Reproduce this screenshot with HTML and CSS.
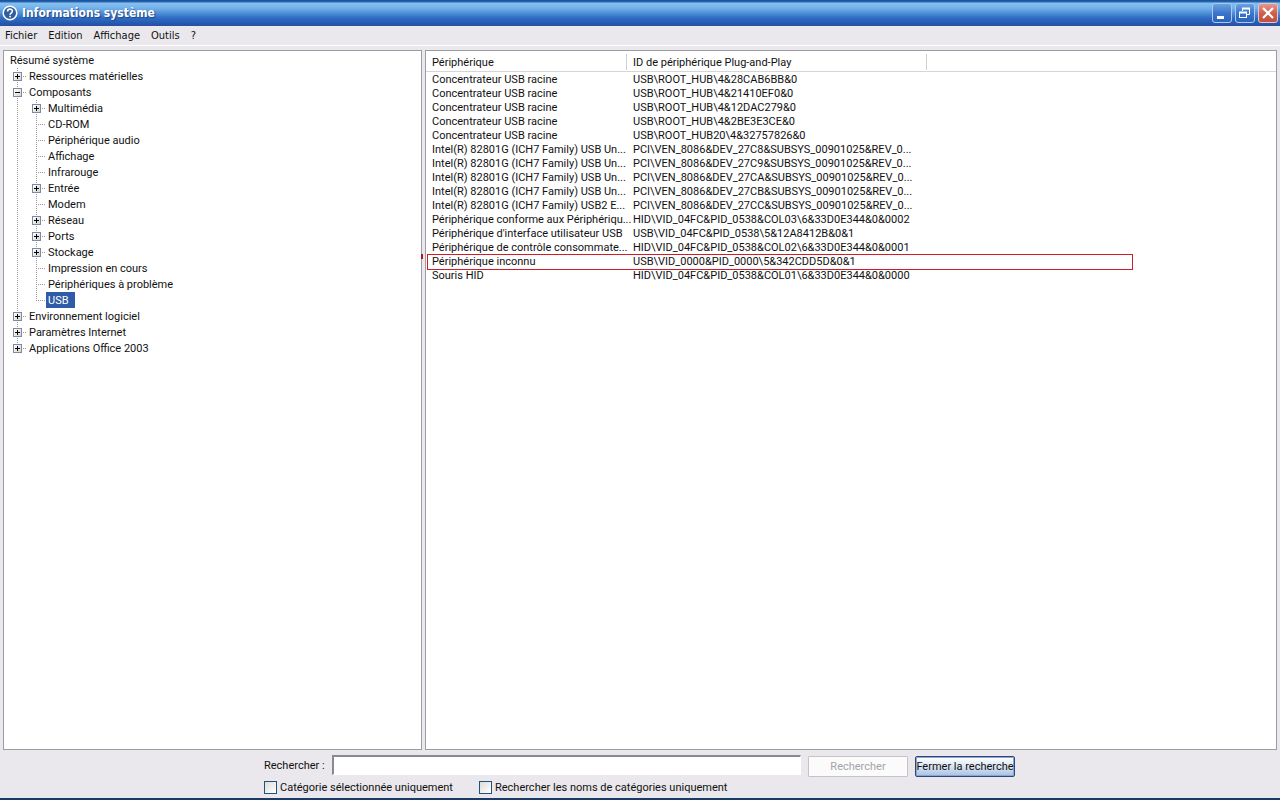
FILE: index.html
```html
<!DOCTYPE html>
<html lang="fr">
<head>
  <meta charset="UTF-8" />
  <meta name="viewport" content="width=device-width, initial-scale=1.0"/>
  <title>Informations système</title>
  <link rel="stylesheet" href="styles.css">
</head>
<body>

  <header class="titlebar">
    <svg class="app-icon" width="16" height="16" viewBox="0 0 16 16">
      <circle cx="8" cy="8" r="6.8" fill="#2f5f9e" stroke="#fff" stroke-width="1.5"/>
      <path d="M5.6 6.4C5.6 3.4 10.4 3.5 10.4 6.2C10.4 7.8 8.1 7.8 8.1 9.8" fill="none" stroke="#fff" stroke-width="1.6"/>
      <rect x="7.3" y="10.8" width="1.6" height="1.6" fill="#fff"/>
    </svg>
    <h1>Informations système</h1>
    <div class="window-buttons">
      <button type="button" class="win-btn" aria-label="Réduire">
        <svg width="18" height="18" viewBox="0 0 18 18"><rect x="4" y="12" width="7" height="3" fill="#fff"/></svg>
      </button>
      <button type="button" class="win-btn" aria-label="Restaurer">
        <svg width="18" height="18" viewBox="0 0 18 18">
          <path d="M6.5 7V4.5H13.5V10.5H11" fill="none" stroke="#fff"/>
          <path d="M6 4.5H14" stroke="#fff" stroke-width="2"/>
          <rect x="3.5" y="8.5" width="7" height="5" fill="none" stroke="#fff"/>
          <path d="M3 8.5H11" stroke="#fff" stroke-width="2"/>
        </svg>
      </button>
      <button type="button" class="win-btn win-close" aria-label="Fermer">
        <svg width="18" height="18" viewBox="0 0 18 18"><path d="M4 4L14 14M14 4L4 14" stroke="#fff" stroke-width="2.2"/></svg>
      </button>
    </div>
  </header>

  <nav class="menubar">
    <button type="button">Fichier</button>
    <button type="button">Edition</button>
    <button type="button">Affichage</button>
    <button type="button">Outils</button>
    <button type="button">?</button>
  </nav>

  <main class="panes">
    <!-- Category tree -->
    <section class="pane tree-pane">
      <div class="root">Résumé système</div>
      <ul class="tree">
        <li><div class="row"><button type="button" class="toggle plus" aria-label="Développer"></button><span>Ressources matérielles</span></div></li>
        <li><div class="row"><button type="button" class="toggle" aria-label="Réduire"></button><span>Composants</span></div>
          <ul>
            <li><div class="row"><button type="button" class="toggle plus" aria-label="Développer"></button><span>Multimédia</span></div></li>
            <li><div class="row"><span>CD-ROM</span></div></li>
            <li><div class="row"><span>Périphérique audio</span></div></li>
            <li><div class="row"><span>Affichage</span></div></li>
            <li><div class="row"><span>Infrarouge</span></div></li>
            <li><div class="row"><button type="button" class="toggle plus" aria-label="Développer"></button><span>Entrée</span></div></li>
            <li><div class="row"><span>Modem</span></div></li>
            <li><div class="row"><button type="button" class="toggle plus" aria-label="Développer"></button><span>Réseau</span></div></li>
            <li><div class="row"><button type="button" class="toggle plus" aria-label="Développer"></button><span>Ports</span></div></li>
            <li><div class="row"><button type="button" class="toggle plus" aria-label="Développer"></button><span>Stockage</span></div></li>
            <li><div class="row"><span>Impression en cours</span></div></li>
            <li><div class="row"><span>Périphériques à problème</span></div></li>
            <li><div class="row"><span class="selected">USB</span></div></li>
          </ul>
        </li>
        <li><div class="row"><button type="button" class="toggle plus" aria-label="Développer"></button><span>Environnement logiciel</span></div></li>
        <li><div class="row"><button type="button" class="toggle plus" aria-label="Développer"></button><span>Paramètres Internet</span></div></li>
        <li><div class="row"><button type="button" class="toggle plus" aria-label="Développer"></button><span>Applications Office 2003</span></div></li>
      </ul>
    </section>

    <!-- Device list -->
    <section class="pane list-pane">
      <table class="devices">
        <colgroup><col class="col-name"><col class="col-id"><col></colgroup>
        <thead>
          <tr><th>Périphérique</th><th>ID de périphérique Plug-and-Play</th><th></th></tr>
        </thead>
        <tbody>
          <tr><td>Concentrateur USB racine</td><td>USB\ROOT_HUB\4&amp;28CAB6BB&amp;0</td><td></td></tr>
          <tr><td>Concentrateur USB racine</td><td>USB\ROOT_HUB\4&amp;21410EF0&amp;0</td><td></td></tr>
          <tr><td>Concentrateur USB racine</td><td>USB\ROOT_HUB\4&amp;12DAC279&amp;0</td><td></td></tr>
          <tr><td>Concentrateur USB racine</td><td>USB\ROOT_HUB\4&amp;2BE3E3CE&amp;0</td><td></td></tr>
          <tr><td>Concentrateur USB racine</td><td>USB\ROOT_HUB20\4&amp;32757826&amp;0</td><td></td></tr>
          <tr><td>Intel(R) 82801G (ICH7 Family) USB Un...</td><td>PCI\VEN_8086&amp;DEV_27C8&amp;SUBSYS_00901025&amp;REV_0...</td><td></td></tr>
          <tr><td>Intel(R) 82801G (ICH7 Family) USB Un...</td><td>PCI\VEN_8086&amp;DEV_27C9&amp;SUBSYS_00901025&amp;REV_0...</td><td></td></tr>
          <tr><td>Intel(R) 82801G (ICH7 Family) USB Un...</td><td>PCI\VEN_8086&amp;DEV_27CA&amp;SUBSYS_00901025&amp;REV_0...</td><td></td></tr>
          <tr><td>Intel(R) 82801G (ICH7 Family) USB Un...</td><td>PCI\VEN_8086&amp;DEV_27CB&amp;SUBSYS_00901025&amp;REV_0...</td><td></td></tr>
          <tr><td>Intel(R) 82801G (ICH7 Family) USB2 E...</td><td>PCI\VEN_8086&amp;DEV_27CC&amp;SUBSYS_00901025&amp;REV_0...</td><td></td></tr>
          <tr><td>Périphérique conforme aux Périphériqu...</td><td>HID\VID_04FC&amp;PID_0538&amp;COL03\6&amp;33D0E344&amp;0&amp;0002</td><td></td></tr>
          <tr><td>Périphérique d'interface utilisateur USB</td><td>USB\VID_04FC&amp;PID_0538\5&amp;12A8412B&amp;0&amp;1</td><td></td></tr>
          <tr><td>Périphérique de contrôle consommate...</td><td>HID\VID_04FC&amp;PID_0538&amp;COL02\6&amp;33D0E344&amp;0&amp;0001</td><td></td></tr>
          <tr class="marked"><td>Périphérique inconnu</td><td>USB\VID_0000&amp;PID_0000\5&amp;342CDD5D&amp;0&amp;1</td><td></td></tr>
          <tr><td>Souris HID</td><td>HID\VID_04FC&amp;PID_0538&amp;COL01\6&amp;33D0E344&amp;0&amp;0000</td><td></td></tr>
        </tbody>
      </table>
    </section>
  </main>

  <form class="search">
    <div class="search-line">
      <label for="query">Rechercher :</label>
      <input type="text" id="query">
      <button type="button" class="btn" disabled>Rechercher</button>
      <button type="button" class="btn btn-default">Fermer la recherche</button>
    </div>
    <div class="search-options">
      <label><input type="checkbox">Catégorie sélectionnée uniquement</label>
      <label><input type="checkbox">Rechercher les noms de catégories uniquement</label>
    </div>
  </form>

</body>
</html>
```

FILE: styles.css
```css
* {
  box-sizing: border-box;
}

body {
  margin: 0;
  height: 100vh;
  display: flex;
  flex-direction: column;
  background: #eae8ec;
  border-bottom: 2px solid #1b3b66;
  color: #111;
  font-family: Roboto, "Liberation Sans", Arial, sans-serif;
  font-size: 11px;
  overflow: hidden;
}

button,
input {
  font: inherit;
  color: inherit;
  margin: 0;
  padding: 0;
}

/* Title bar */
.titlebar {
  display: flex;
  align-items: center;
  gap: 4px;
  height: 26px;
  padding: 0 2px;
  background: linear-gradient(#17509a 0, #2a68b4 2px, #86c0f0 3px, #74b2ea 8px, #4e90d6 13px, #2f6cc4 18px, #2455ae 24px, #2a4f98 26px);
}

.titlebar h1 {
  flex: 1;
  margin: 0;
  color: #fff;
  font-family: "DejaVu Sans Condensed", "DejaVu Sans", sans-serif;
  font-size: 12px;
  text-shadow: 1px 1px 1px #1c4484;
}

.window-buttons {
  display: flex;
  gap: 3px;
}

.win-btn {
  width: 20px;
  height: 20px;
  display: flex;
  border: 1px solid #a9c9f2;
  border-radius: 3px;
  background: linear-gradient(#6ba3e0, #3b76cb 50%, #2c62bb);
}

.win-close {
  background: linear-gradient(#e09a90, #d0604e 50%, #c24f3e);
  border-color: #e8c4cc;
}

/* Menu */
.menubar {
  display: flex;
  gap: 11px;
  height: 20px;
  padding: 0 5px;
  border-bottom: 1px solid #fff;
}

.menubar button {
  border: none;
  background: none;
  font-family: "DejaVu Sans Condensed", "DejaVu Sans", sans-serif;
  font-size: 11px;
}

/* Panes */
.panes {
  flex: 1;
  min-height: 0;
  display: grid;
  grid-template-columns: 419fr 852fr;
  gap: 3px;
  padding: 4px 3px 0;
}

.pane {
  background: #fff;
  border: 1px solid #9d9da1;
}

.root {
  padding: 2px 6px 0;
  line-height: 15px;
}

.tree,
.tree ul {
  list-style: none;
  margin: 0;
  padding: 0;
}

.tree {
  padding-left: 9px;
}

.tree ul {
  padding-left: 19px;
}

/* dotted branch lines */
.tree li {
  background: linear-gradient(#999 50%, transparent 50%) 4px 0 / 1px 2px repeat-y;
}

.tree li:last-child {
  background: none;
}

.tree li:last-child > .row {
  background:
    repeating-linear-gradient(#999 0 1px, transparent 1px 2px) 4px 0 / 1px 8px no-repeat,
    repeating-linear-gradient(90deg, #999 0 1px, transparent 1px 2px) 4px 8px / 10px 1px no-repeat;
}

.row {
  display: grid;
  grid-template-columns: 14px max-content;
  align-items: center;
  height: 16px;
  background: repeating-linear-gradient(90deg, #999 0 1px, transparent 1px 2px) 4px 8px / 10px 1px no-repeat;
}

.row span {
  grid-column: 2;
  padding: 1px 2px 0;
  line-height: 15px;
}

.row .selected {
  padding-right: 6px;
  background: #2f5ba8;
  color: #fff;
}

.toggle {
  width: 9px;
  height: 9px;
  border: 1px solid #7a8ca5;
  background:
    linear-gradient(#000, #000) center / 5px 1px no-repeat,
    linear-gradient(135deg, #fff, #d8d5cc);
}

.plus {
  background:
    linear-gradient(#000, #000) center / 5px 1px no-repeat,
    linear-gradient(#000, #000) center / 1px 5px no-repeat,
    linear-gradient(135deg, #fff, #d8d5cc);
}

/* Device table */
.devices {
  width: 100%;
  table-layout: fixed;
  border-collapse: separate;
  border-spacing: 0;
}

.col-name {
  width: 201px;
}

.col-id {
  width: 300px;
}

.devices th {
  height: 21px;
  padding: 2px 6px 0;
  border-bottom: 1px solid #d5d5d5;
  background: linear-gradient(#d0d0d0, #d0d0d0) right 3px / 1px 16px no-repeat;
  font-weight: normal;
  text-align: left;
}

.devices th:last-child {
  background: none;
}

.devices td {
  height: 14px;
  padding: 1px 0 0 6px;
  line-height: 13px;
  white-space: nowrap;
}

/* red frame and its stray mark on the splitter */
.marked {
  position: relative;
}

.marked td:first-child::before {
  content: "";
  position: absolute;
  top: 0;
  left: 1px;
  width: 704px;
  height: 14px;
  border: 1px solid #d01c24;
}

.marked td:first-child::after {
  content: "";
  position: absolute;
  top: 0;
  left: -5px;
  width: 2px;
  height: 5px;
  background: #b01822;
}

/* Search area */
.search {
  width: 752px;
  max-width: 100%;
  height: 48px;
  margin: 0 auto;
  padding: 5px 1px 0 0;
}

.search-line {
  display: flex;
  gap: 7px;
  height: 22px;
}

.search-line label {
  padding-top: 1px;
  line-height: 19px;
}

.search-line input {
  flex: 1;
  min-width: 0;
  height: 20px;
  border: 1px solid #fff;
  border-top: 2px solid #8a8a8c;
  border-left: 2px solid #8a8a8c;
  background: #fff;
}

.btn {
  width: 100px;
  height: 21px;
  align-self: flex-end;
  border: 1px solid #c4c3c8;
  border-radius: 1px;
  background: #fbfbfc;
  white-space: nowrap;
}

.btn:disabled {
  color: #a5a4a8;
}

.btn-default {
  border: 1px solid #2c4878;
  border-radius: 2px;
  background: linear-gradient(#fff, #dfe8f5 45%, #a9c0e2);
  box-shadow: inset 0 0 0 1px #8ba6d0;
}

.search-options {
  display: flex;
  gap: 26px;
  padding-top: 4px;
}

.search-options label {
  display: flex;
  align-items: center;
  gap: 3px;
  line-height: 13px;
}

.search-options input {
  appearance: none;
  width: 13px;
  height: 13px;
  border: 1px solid #1d5281;
  background: linear-gradient(135deg, #dddcd5, #fff);
}
```
